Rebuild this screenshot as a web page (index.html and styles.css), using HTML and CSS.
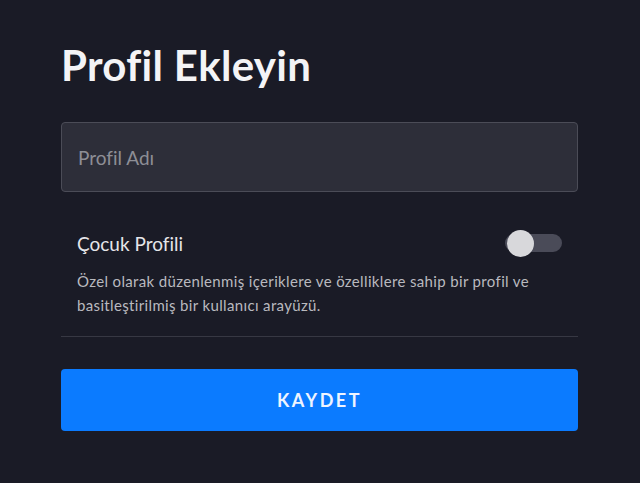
FILE: index.html
```html
<!DOCTYPE html>
<html lang="tr">
<head>
<meta charset="utf-8">
<link rel="stylesheet" href="styles.css">
</head>
<body>
<main class="page">
  <h1 class="title">Profil Ekleyin</h1>
  <div class="field"><span class="placeholder">Profil Adı</span></div>
  <section class="option">
    <div class="option-row">
      <span class="option-label">Çocuk Profili</span>
      <span class="toggle"><span class="knob"></span></span>
    </div>
    <p class="option-desc">Özel olarak düzenlenmiş içeriklere ve özelliklere sahip bir profil ve basitleştirilmiş bir kullanıcı arayüzü.</p>
  </section>
  <div class="divider"></div>
  <button class="save">KAYDET</button>
</main>
</body>
</html>
```
FILE: styles.css
```css
html, body {
  margin: 0;
  padding: 0;
  background: #1a1b26;
  height: 100%;
}
.page {
  width: 517px;
  padding: 40px 0 0 61px;
  font-family: Lato, "Noto Sans", sans-serif;
  display: flex;
  flex-direction: column;
}
.title {
  margin: 0;
  font-size: 42px;
  font-weight: 700;
  color: #f4f4f6;
  line-height: 50px;
  letter-spacing: 0.3px;
}
.field {
  margin-top: 32px;
  height: 68px;
  border: 1px solid #4b4c57;
  border-radius: 4px;
  background: #2d2e39;
  display: flex;
  align-items: center;
  padding-left: 16px;
}
.placeholder {
  font-size: 19px;
  color: #8d8e96;
}
.option {
  padding: 0 16px;
  margin-top: 38px;
}
.option-row {
  display: flex;
  align-items: center;
  justify-content: space-between;
  height: 26px;
}
.option-label {
  font-size: 19px;
  color: #e6e6e9;
}
.toggle {
  position: relative;
  width: 57px;
  height: 18px;
  border-radius: 9px;
  background: #4a4b58;
}
.knob {
  position: absolute;
  left: 2px;
  top: -4px;
  width: 27px;
  height: 27px;
  border-radius: 50%;
  background: #d8d8db;
}
.option-desc {
  margin: 13px 0 0;
  font-size: 15px;
  line-height: 24px;
  letter-spacing: 0.35px;
  color: #b9b9bf;
}
.divider {
  margin-top: 19px;
  height: 1px;
  background: #373843;
}
.save {
  margin-top: 32px;
  height: 62px;
  border: none;
  border-radius: 4px;
  background: #0b7bff;
  color: #eef4ff;
  font-family: Lato, "Noto Sans", sans-serif;
  font-size: 18px;
  font-weight: 700;
  letter-spacing: 2.5px;
  padding: 0;
}
```
